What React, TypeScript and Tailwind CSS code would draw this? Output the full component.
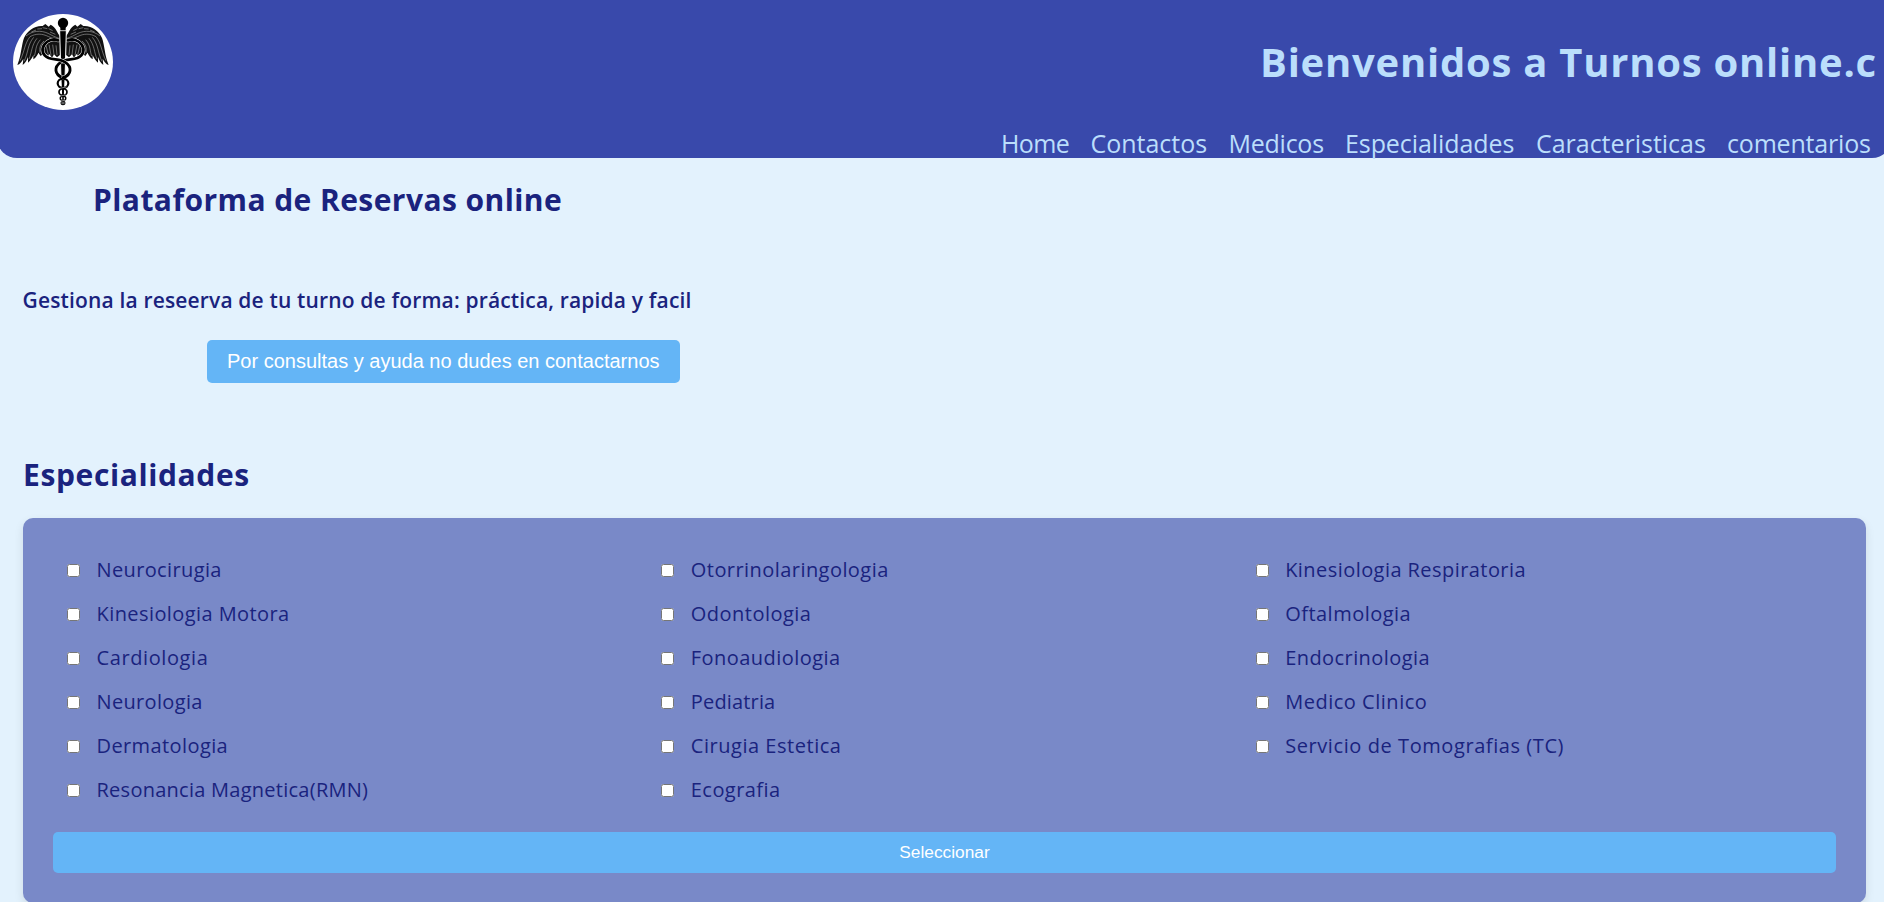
type Item = { label: string; spacing: string };

const columns: Item[][] = [
  [
    { label: "Neurocirugia", spacing: "tracking-[0.37px]" },
    { label: "Kinesiologia Motora", spacing: "tracking-[0.42px]" },
    { label: "Cardiologia", spacing: "tracking-[0.6px]" },
    { label: "Neurologia", spacing: "tracking-[0.34px]" },
    { label: "Dermatologia", spacing: "tracking-[0.4px]" },
    { label: "Resonancia Magnetica(RMN)", spacing: "tracking-[0.26px]" },
  ],
  [
    { label: "Otorrinolaringologia", spacing: "tracking-[0.44px]" },
    { label: "Odontologia", spacing: "tracking-[0.48px]" },
    { label: "Fonoaudiologia", spacing: "tracking-[0.45px]" },
    { label: "Pediatria", spacing: "tracking-[0.16px]" },
    { label: "Cirugia Estetica", spacing: "tracking-[0.53px]" },
    { label: "Ecografia", spacing: "tracking-[0.43px]" },
  ],
  [
    { label: "Kinesiologia Respiratoria", spacing: "tracking-[0.44px]" },
    { label: "Oftalmologia", spacing: "tracking-[0.48px]" },
    { label: "Endocrinologia", spacing: "tracking-[0.43px]" },
    { label: "Medico Clinico", spacing: "tracking-[0.52px]" },
    { label: "Servicio de Tomografias (TC)", spacing: "tracking-[0.58px]" },
  ],
];

const links = [
  { label: "Home", style: "w-[89.5px] tracking-[-0.6px]" },
  { label: "Contactos", style: "w-[138px] tracking-[-0.02px]" },
  { label: "Medicos", style: "w-[116.5px] tracking-[-0.25px]" },
  { label: "Especialidades", style: "w-[191px] tracking-[-0.08px]" },
  { label: "Caracteristicas", style: "w-[191px] tracking-[-0.02px]" },
  { label: "comentarios", style: "w-[157px] tracking-[-0.19px]" },
];

function Wing() {
  return (
    <g>
      <path
        d="M156 84 C148 76 146 60 128 50 L122 56 L112 48 L104 54 C80 52 58 68 48 90 C40 112 40 142 28 171 C36 168 41 162 46 152 L44 171 C53 164 57 157 60 147 L60 164 C69 156 73 149 76 141 L76 154 C84 148 88 142 91 134 L98 144 L109 135 L118 148 L124 138 L132 149 L138 139 L147 148 L157 140 Z"
        fill="#111"
      />
      <g fill="none" stroke="#bbb" strokeWidth="1.6">
        <path d="M36 158 C50 130 49 108 66 86" />
        <path d="M48 160 C61 135 58 110 77 88" />
        <path d="M63 153 C72 133 70 112 87 91" />
        <path d="M79 144 C85 128 81 114 97 95" />
        <path d="M96 134 C94 120 96 110 108 99" />
        <path d="M54 84 C74 68 98 66 120 76 C132 82 142 88 155 92" />
        <path d="M66 86 C84 76 102 76 122 86 C136 92 146 95 156 97" />
        <path d="M70 72 L84 66 M88 63 L102 62 M104 59 L118 62 M122 62 L134 68 M126 72 L142 79" />
        <path d="M114 112 L121 140 M123 110 L129 142 M134 110 L138 140 M144 112 L147 141" />
      </g>
    </g>
  );
}

const coil =
  "M150 97 C136 91 119 96 109 110 C98 126 104 142 122 150 C138 156 158 152 172 163 C192 176 192 200 165 209";

function Logo() {
  return (
    <svg viewBox="15 18 300 288" className="h-24 w-[100px] shrink-0" aria-hidden="true">
      <ellipse cx="165" cy="162" rx="150" ry="144" fill="#fff" />
      <Wing />
      <g transform="translate(330 0) scale(-1 1)">
        <Wing />
      </g>
      <path d="M155 68 H175 L171 215 L168 292 H162 L159 215 Z" fill="#000" stroke="#fff" strokeWidth="3" />
      <circle cx="165" cy="45" r="15.5" fill="#000" />
      <path d="M157 56 H173 V67 H157 Z" fill="#000" />
      <g fill="none" strokeLinecap="round">
        <g transform="translate(330 0) scale(-1 1)">
          <path d={coil} stroke="#fff" strokeWidth="11" />
          <path d={coil} stroke="#000" strokeWidth="8.5" />
        </g>
        <path d={coil} stroke="#fff" strokeWidth="11" />
        <path d={coil} stroke="#000" strokeWidth="8.5" />
        <ellipse cx="165" cy="226" rx="16" ry="14" stroke="#000" strokeWidth="6.5" />
        <ellipse cx="165" cy="252" rx="12" ry="10" stroke="#000" strokeWidth="5" />
        <ellipse cx="165" cy="271" rx="8.5" ry="6.5" stroke="#000" strokeWidth="4" />
        <ellipse cx="165" cy="285" rx="6" ry="5" stroke="#111" strokeWidth="3.5" />
        <path d="M155 241 L175 237 M158 264 L172 261 M160 279 L170 277" stroke="#fff" strokeWidth="1.5" />
      </g>
    </svg>
  );
}

export default function App() {
  return (
    <div className="h-[902px] overflow-hidden bg-[#e3f2fd] font-['Open_Sans',sans-serif] text-[#1a237e]">
      <header className="-mr-2 -ml-[3px] flex h-[158px] justify-between rounded-b-[20px] bg-[#3949ab] pt-3.5 pr-2 pl-4 text-[#bbdefb]">
        <Logo />
        <div className="flex flex-col items-end pt-[21px]">
          <h1 className="mr-2 w-[616px] text-[40px] leading-[54px] font-bold tracking-[0.75px] whitespace-nowrap">
            Bienvenidos a Turnos online.c
          </h1>
          <nav className="mt-[37px] flex text-[25px] leading-[34px]">
            {links.map((link) => (
              <a key={link.label} className={"shrink-0 whitespace-nowrap " + link.style}>
                {link.label}
              </a>
            ))}
          </nav>
        </div>
      </header>

      <section className="flex flex-col items-start pt-[21px]">
        <h2 className="ml-[93px] text-[30px] leading-[42px] font-bold tracking-[0.43px]">
          Plataforma de Reservas online
        </h2>
        <h3 className="mt-[65px] ml-[22.5px] text-[21px] leading-7 font-semibold tracking-[0.16px]">
          Gestiona la reseerva de tu turno de forma: práctica, rapida y facil
        </h3>
        <button className="mt-[26px] ml-[207px] h-[43px] rounded-[5px] bg-[#64b5f6] px-5 pb-0.5 font-['Liberation_Sans',sans-serif] text-xl text-white">
          Por consultas y ayuda no dudes en contactarnos
        </button>
      </section>

      <section className="pt-[71px] pr-[18px] pl-[23px]">
        <h2 className="text-[30px] leading-[42px] font-bold tracking-[0.62px]">Especialidades</h2>
        <form className="mt-[22px] rounded-[10px] bg-[#7989c8] p-[30px] shadow-[0_4px_10px_rgba(0,0,0,0.1)]">
          <div className="grid grid-cols-3">
            {columns.map((column, index) => (
              <div key={index} className="flex flex-col">
                {column.map((item) => (
                  <label key={item.label} className="flex h-11 items-start pt-2 pl-3.5 text-xl leading-7">
                    <input type="checkbox" className="mt-2 mr-[16.5px] h-[13px] w-[13px] shrink-0" />
                    <span className={"whitespace-nowrap " + item.spacing}>{item.label}</span>
                  </label>
                ))}
              </div>
            ))}
          </div>
          <button
            type="button"
            className="mt-5 block h-[41px] w-full rounded-[5px] bg-[#64b5f6] font-['Liberation_Sans',sans-serif] text-[17.3px] text-white"
          >
            Seleccionar
          </button>
        </form>
      </section>
    </div>
  );
}
